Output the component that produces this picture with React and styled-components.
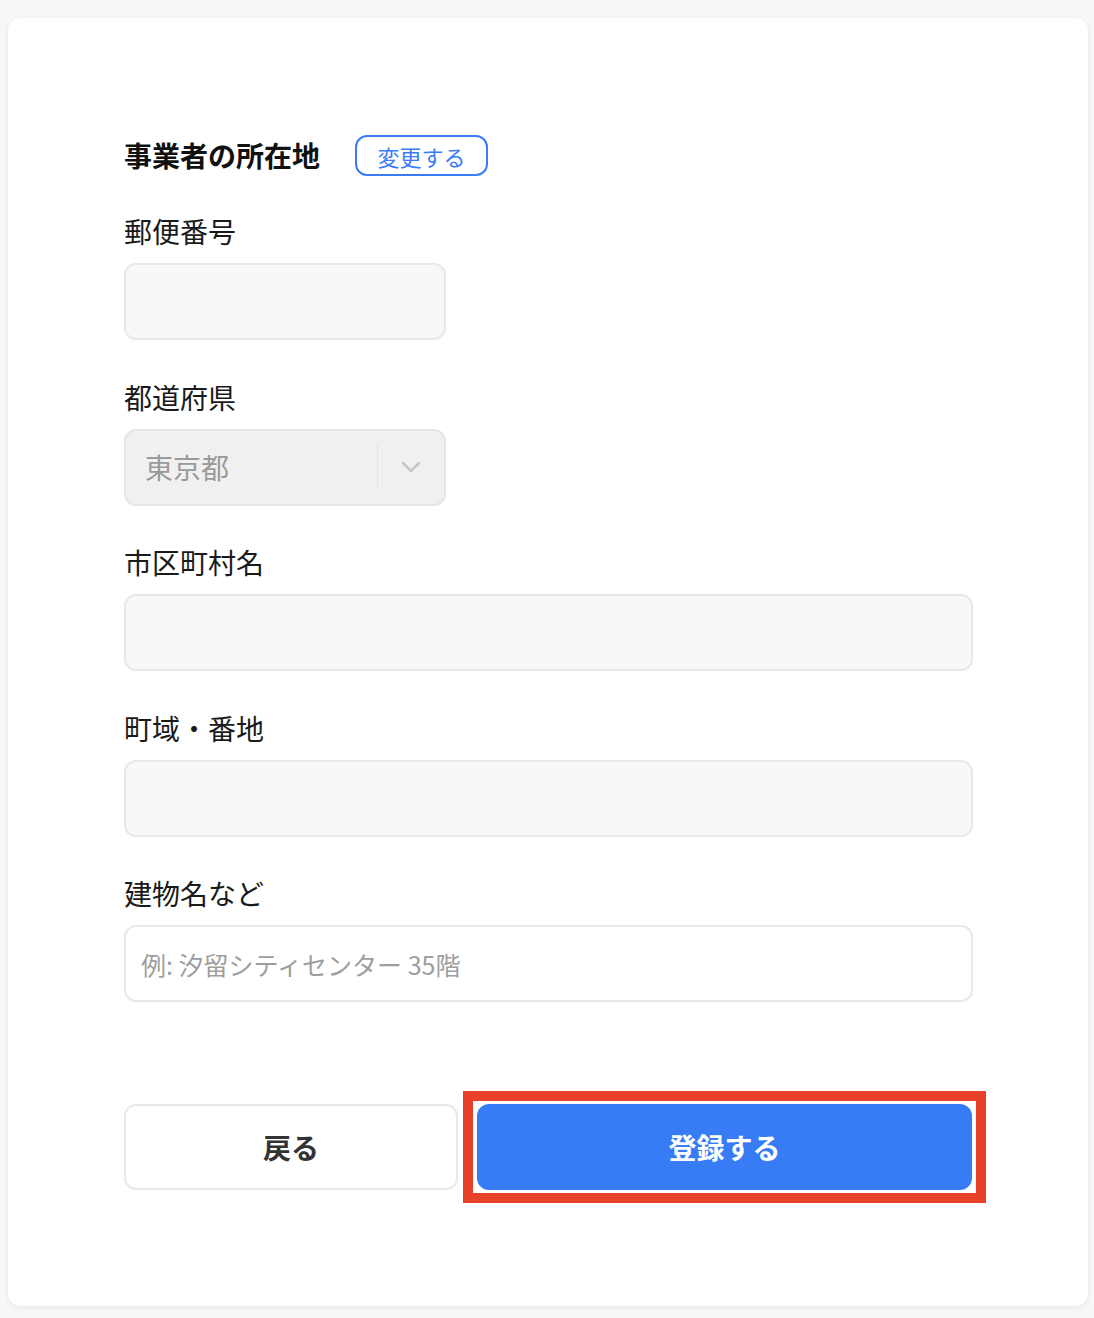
import React from 'react';
import styled, { createGlobalStyle } from 'styled-components';

const GlobalStyle = createGlobalStyle`
  html, body {
    margin: 0;
    padding: 0;
    background-color: #f7f7f7;
  }
  body {
    font-family: "Noto Sans CJK JP", "Noto Sans", "Liberation Sans", sans-serif;
    color: #1a1a1a;
  }
  * {
    box-sizing: border-box;
  }
`;

const Page = styled.div`
  padding: 18px 6px 12px 8px;
  min-height: 1318px;
`;

const Card = styled.div`
  width: 1080px;
  background-color: #fff;
  border-radius: 12px;
  box-shadow: 0 1px 4px rgba(0, 0, 0, 0.08);
  padding: 117px 116px 116px 116px;
`;

const HeadingRow = styled.div`
  display: flex;
  align-items: center;
  gap: 35px;
  height: 41px;
  margin-bottom: 34px;
`;

const Heading = styled.h2`
  margin: 0;
  font-size: 28px;
  font-weight: 700;
  color: #111;
  line-height: 41px;
`;

const OutlineButton = styled.button`
  height: 41px;
  width: 133px;
  border: 2px solid #3a7cf5;
  border-radius: 12px;
  background: #fff;
  color: #3a7cf5;
  font-family: inherit;
  font-size: 22px;
  padding: 0;
  cursor: pointer;
`;

const Fields = styled.div`
  display: flex;
  flex-direction: column;
  gap: 35.5px;
`;

const Field = styled.div`
  display: flex;
  flex-direction: column;
  gap: 11px;
`;

const Label = styled.label`
  font-size: 28px;
  line-height: 42px;
  color: #1a1a1a;
`;

const Input = styled.input`
  width: ${(p) => (p.$short ? '322px' : '849px')};
  height: 77px;
  border: 2px solid #e8e8e8;
  border-radius: 12px;
  background-color: ${(p) => (p.$white ? '#fff' : '#f8f8f8')};
  padding: 0 15px;
  font-family: inherit;
  font-size: 25px;
  color: #1a1a1a;
  outline: none;

  &::placeholder {
    color: #9e9e9e;
  }
`;

const SelectBox = styled.div`
  width: 322px;
  height: 77px;
  border: 2px solid #e6e6e6;
  border-radius: 12px;
  background-color: #f0f0f0;
  display: flex;
  align-items: center;
`;

const SelectValue = styled.span`
  flex: 1;
  padding-left: 19px;
  font-size: 28px;
  color: #9a9a9a;
`;

const Divider = styled.span`
  width: 1px;
  height: 44px;
  background-color: #e2e2e2;
`;

const Chevron = styled.span`
  width: 66px;
  display: flex;
  align-items: center;
  justify-content: center;
`;

const ButtonRow = styled.div`
  display: flex;
  gap: 19px;
  margin-top: 102px;
`;

const BackButton = styled.button`
  flex: 2 1 0;
  min-width: 0;
  height: 86px;
  padding: 0;
  border: 2px solid #e8e8e8;
  border-radius: 12px;
  background: #fff;
  color: #333;
  font-family: inherit;
  font-size: 28px;
  font-weight: 700;
  cursor: pointer;
`;

const Highlight = styled.div`
  flex: 3 1 0;
  min-width: 0;
  position: relative;

  &::after {
    content: '';
    position: absolute;
    inset: -13px -14px;
    border: 10px solid #e8412a;
    pointer-events: none;
  }
`;

const PrimaryButton = styled.button`
  width: 100%;
  height: 86px;
  padding: 0;
  border: none;
  border-radius: 12px;
  background-color: #377bf5;
  color: #fff;
  font-family: inherit;
  font-size: 28px;
  font-weight: 700;
  cursor: pointer;
`;

function App() {
  return (
    <Page>
      <GlobalStyle />
      <Card>
        <HeadingRow>
          <Heading>事業者の所在地</Heading>
          <OutlineButton>変更する</OutlineButton>
        </HeadingRow>
        <Fields>
          <Field>
            <Label>郵便番号</Label>
            <Input $short />
          </Field>
          <Field>
            <Label>都道府県</Label>
            <SelectBox>
              <SelectValue>東京都</SelectValue>
              <Divider />
              <Chevron>
                <svg width="22" height="14" viewBox="0 0 22 14">
                  <polyline points="3,3 11,11 19,3" fill="none" stroke="#c6c6c6" strokeWidth="2.5" strokeLinecap="round" strokeLinejoin="round" />
                </svg>
              </Chevron>
            </SelectBox>
          </Field>
          <Field>
            <Label>市区町村名</Label>
            <Input />
          </Field>
          <Field>
            <Label>町域・番地</Label>
            <Input />
          </Field>
          <Field>
            <Label>建物名など</Label>
            <Input $white placeholder="例: 汐留シティセンター 35階" />
          </Field>
        </Fields>
        <ButtonRow>
          <BackButton>戻る</BackButton>
          <Highlight>
            <PrimaryButton>登録する</PrimaryButton>
          </Highlight>
        </ButtonRow>
      </Card>
    </Page>
  );
}

export default App;
